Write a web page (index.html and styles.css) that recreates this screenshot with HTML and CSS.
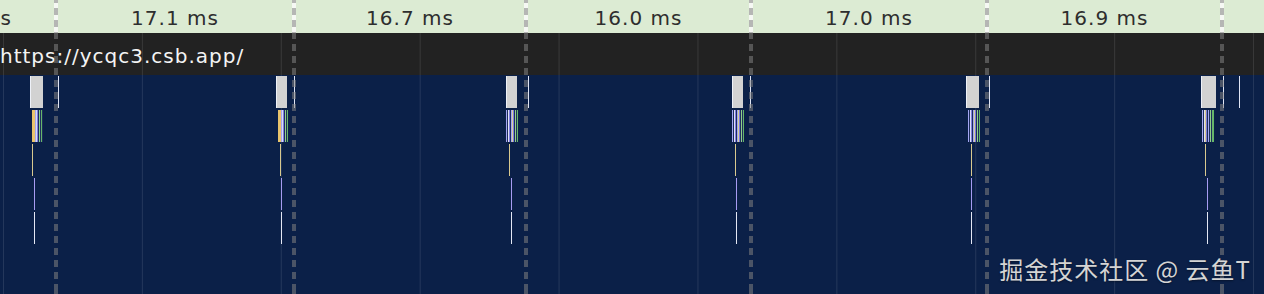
FILE: index.html
```html
<!DOCTYPE html>
<html lang="en">
<head>
    <meta charset="UTF-8">
    <meta name="viewport" content="width=device-width, initial-scale=1.0">
    <title>Frames</title>
    <link rel="stylesheet" href="styles.css">
</head>
<body>
<div class="timeline">
    <div class="ruler">
        <div class="frame-label" style="width:176px;margin-left:-120px">16.6 ms</div>
        <div class="frame-label" style="width:238px">17.1 ms</div>
        <div class="frame-label" style="width:232px">16.7 ms</div>
        <div class="frame-label" style="width:225px">16.0 ms</div>
        <div class="frame-label" style="width:236px">17.0 ms</div>
        <div class="frame-label" style="width:235px">16.9 ms</div>
    </div>
    <div class="track-title">https://ycqc3.csb.app/</div>
    <div class="lanes">
        <div class="frame" style="left:30px">
            <div class="ev main" style="width:13px"></div>
            <div class="ev stripes warm" style="margin-left:2px;width:11px"></div>
            <div class="ev line tan" style="margin-left:2px"></div>
            <div class="ev line violet" style="margin-left:4px"></div>
            <div class="ev line pale" style="margin-left:4px"></div>
        </div>
        <div class="frame" style="left:276px">
            <div class="ev main" style="width:11px"></div>
            <div class="ev stripes warm" style="margin-left:2px;width:10px"></div>
            <div class="ev line tan" style="margin-left:4px"></div>
            <div class="ev line violet" style="margin-left:5px"></div>
            <div class="ev line pale" style="margin-left:5px"></div>
        </div>
        <div class="frame" style="left:506px">
            <div class="ev main" style="width:11px"></div>
            <div class="ev stripes cool" style="width:12px"></div>
            <div class="ev line tan" style="margin-left:3px"></div>
            <div class="ev line violet" style="margin-left:5px"></div>
            <div class="ev line pale" style="margin-left:5px"></div>
        </div>
        <div class="frame" style="left:732px">
            <div class="ev main" style="width:11px"></div>
            <div class="ev stripes cool" style="width:12px"></div>
            <div class="ev line tan" style="margin-left:3px"></div>
            <div class="ev line violet" style="margin-left:4px"></div>
            <div class="ev line pale" style="margin-left:4px"></div>
        </div>
        <div class="frame" style="left:966px">
            <div class="ev main" style="width:13px"></div>
            <div class="ev stripes cool" style="margin-left:2px;width:12px"></div>
            <div class="ev line tan" style="margin-left:5px"></div>
            <div class="ev line violet" style="margin-left:5px"></div>
            <div class="ev line pale" style="margin-left:5px"></div>
        </div>
        <div class="frame" style="left:1201px">
            <div class="ev main" style="width:15px"></div>
            <div class="ev stripes mixed" style="margin-left:1px;width:12px"></div>
            <div class="ev line tan" style="margin-left:4px"></div>
            <div class="ev line violet" style="margin-left:6px"></div>
            <div class="ev line pale" style="margin-left:6px"></div>
        </div>

        <div class="tick" style="left:58px"></div>
        <div class="tick" style="left:294px"></div>
        <div class="tick" style="left:528px"></div>
        <div class="tick" style="left:750px"></div>
        <div class="tick" style="left:989px"></div>
        <div class="tick" style="left:1223px"></div>
        <div class="tick" style="left:1239px"></div>
    </div>

    <div class="divider" style="left:54px"></div>
    <div class="divider" style="left:292px"></div>
    <div class="divider" style="left:524px"></div>
    <div class="divider" style="left:749px"></div>
    <div class="divider" style="left:985px"></div>
    <div class="divider" style="left:1220px"></div>

    <div class="watermark">掘金技术社区 @ 云鱼T</div>
</div>
</body>
</html>
```

FILE: styles.css
```css
body {
    margin: 0;
    font-family: "DejaVu Sans", Verdana, sans-serif;
    background-color: #0b2048;
}
.timeline {
    position: relative;
    width: 1264px;
    height: 294px;
    overflow: hidden;
    background-color: #0b2048;
}
.ruler {
    display: flex;
    height: 33px;
    background-color: #dcebd3;
}
.frame-label {
    flex: none;
    text-align: center;
    font-size: 20px;
    letter-spacing: 1px;
    line-height: 36px;
    color: #2e2e2e;
    white-space: nowrap;
}
.track-title,
.lanes {
    background-image: linear-gradient(to right, rgba(255, 255, 255, 0.1) 1px, transparent 1px);
    background-size: 138.9px 100%;
    background-position: 3px 0;
}
.track-title {
    height: 42px;
    background-color: #222;
    color: #f4f4f4;
    font-size: 20px;
    letter-spacing: 1px;
    line-height: 46px;
    white-space: nowrap;
}
.lanes {
    position: relative;
    height: 219px;
}
.frame {
    position: absolute;
    top: 1px;
    display: flex;
    flex-direction: column;
    align-items: flex-start;
    gap: 2px;
}
.ev {
    height: 32px;
}
.ev.main {
    box-sizing: border-box;
    background-color: #d2d2d2;
    border-left: 1px solid #eef1f8;
}
.ev.line {
    width: 1px;
}
.ev.tan { background-color: #d9c98f; }
.ev.violet { background-color: #a79cf2; }
.ev.pale { background-color: #e4e7f4; }
.ev.stripes.warm {
    background: linear-gradient(to right,
        #e9c46c 0 3px, #a4a6f2 3px 4px, #d8dcf2 4px 5px, #7d7de0 5px 6px,
        #1d2d5a 6px 7px, #8fcf8a 7px 8px, #1d2d5a 8px 9px, #66b66a 9px 10px, #1d2d5a 10px);
}
.ev.stripes.cool {
    background: linear-gradient(to right,
        #a4a6f2 0 1px, #1d2d5a 1px 2px, #dfe0f4 2px 3px, #7d7de0 3px 4px,
        #1d2d5a 4px 5px, #a4a6f2 5px 6px, #d8cf98 6px 7px, #7d7de0 7px 8px,
        #1d2d5a 8px 9px, #8fcf8a 9px 10px, #1d2d5a 10px 11px, #66b66a 11px 12px);
}
.ev.stripes.mixed {
    background: linear-gradient(to right,
        #a4a6f2 0 1px, #1d2d5a 1px 2px, #dfe0f4 2px 3px, #d9c98f 3px 4px,
        #7d7de0 4px 5px, #1d2d5a 5px 6px, #a4a6f2 6px 7px, #1d2d5a 7px 8px,
        #8fcf8a 8px 9px, #1d2d5a 9px 10px, #66b66a 10px 12px);
}
.tick {
    position: absolute;
    top: 1px;
    width: 1px;
    height: 32px;
    background-color: #dfe4f4;
}
.divider {
    position: absolute;
    top: 0;
    width: 4px;
    height: 100%;
    background:
        repeating-linear-gradient(to bottom, rgba(128, 128, 128, 0.55) 0 7px, transparent 7px 12px),
        linear-gradient(to bottom, #f6f8f4 0 33px, transparent 33px);
    background-position: 0 -4px, 0 0;
}
.watermark {
    position: absolute;
    right: 13px;
    bottom: 10px;
    font-family: "Noto Sans CJK SC", sans-serif;
    font-size: 24px;
    letter-spacing: 1px;
    line-height: 30px;
    color: #d4d4d4;
    text-shadow: 0 1px 2px rgba(0, 0, 0, 0.4);
    white-space: nowrap;
}
```
